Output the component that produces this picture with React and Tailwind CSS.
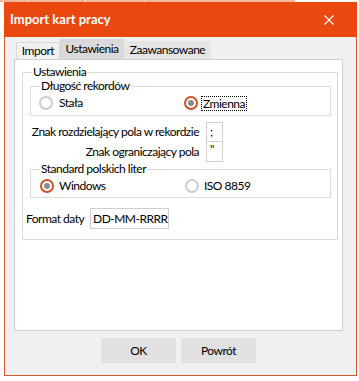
function Radio({ checked }) {
  if (checked) {
    return (
      <span className="w-[14px] h-[14px] rounded-full border-2 border-[#d4501f] bg-white flex items-center justify-center shrink-0">
        <span className="w-[6px] h-[6px] rounded-full bg-[#8c8c8c]" />
      </span>
    );
  }
  return <span className="w-[14px] h-[14px] rounded-full border-2 border-[#cdcdcd] bg-white shrink-0" />;
}

function Group({ title, className, children }) {
  return (
    <fieldset className={`border border-[#dcdcdc] ${className}`}>
      <legend className="ml-[9px] px-[1px] leading-[14px]">{title}</legend>
      {children}
    </fieldset>
  );
}

export default function App() {
  return (
    <div className="w-[359px] h-[381px] bg-white overflow-hidden whitespace-nowrap text-[12px] tracking-[-0.5px] text-black font-['Lato','Segoe_UI',sans-serif]">
      {/* strip of the window behind */}
      <div className="h-[2px] flex bg-[#f6b79c]">
        <div className="w-[27px]" />
        <div className="w-[1px] bg-white" />
        <div className="w-[57px]" />
        <div className="w-[1px] bg-white" />
        <div className="w-[59px]" />
        <div className="w-[1px] bg-white" />
        <div className="w-[149px]" />
        <div className="flex-1 bg-white" />
      </div>

      <div className="ml-[4px] w-[353px] h-[374px] flex flex-col">
        <div className="h-[35px] bg-[#e9490f] flex items-center justify-between pl-[6px] pr-[20px]">
          <span className="text-white font-bold text-[13px] tracking-normal">Import kart pracy</span>
          <svg width="10" height="10" viewBox="0 0 10 10" className="mr-[3px]">
            <path d="M0.5 0.5 L9.5 9.5 M9.5 0.5 L0.5 9.5" stroke="white" strokeWidth="1.1" />
          </svg>
        </div>

        <div className="flex-1 flex flex-col bg-[#f0f0f0] border-x border-b border-[#d95a2c]">
          <div className="mt-[2px] h-[20px] pl-[11px] flex items-end">
            <div className="w-[44px] h-[17px] border border-b-0 border-[#dadada] bg-[#f0f0f0] flex items-center justify-center">
              Import
            </div>
            <div className="w-[64px] h-[20px] bg-[#d9d9d9] flex items-center justify-center">
              Ustawienia
            </div>
            <div className="w-[87px] h-[18px] bg-[#e5e5e5] flex items-center justify-center">
              Zaawansowane
            </div>
          </div>

          <div className="ml-[9px] w-[329px] h-[272px] bg-white border border-[#d0d0d0]">
            <Group title="Ustawienia" className="ml-[7px] mt-[5px] w-[316px] pb-[10px]">
              <Group title="Długość rekordów" className="ml-[7px] w-[301px] pb-[2px]">
                <div className="h-[20px] pl-[8px] grid grid-cols-[145px_1fr] items-center">
                  <div className="flex items-center gap-[6px]">
                    <Radio />
                    <span>Stała</span>
                  </div>
                  <div className="flex items-center">
                    <Radio checked />
                    <span className="ml-[3px] px-[1px] leading-[13px] border border-dotted border-black">
                      Zmienna
                    </span>
                  </div>
                </div>
              </Group>

              <div className="mt-[6px] flex">
                <div className="w-[176px] flex flex-col items-end">
                  <div className="h-[20px] flex items-center">Znak rozdzielający pola w rekordzie</div>
                  <div className="h-[20px] flex items-center">Znak ograniczający pola</div>
                </div>
                <div className="ml-[7px] w-[17px] h-[40px] border border-[#cfcfcf] flex flex-col">
                  <div className="h-[19px] border-b border-[#cfcfcf] pl-[3px] leading-[18px]">;</div>
                  <div className="flex-1 pl-[3px] leading-[14px]">"</div>
                </div>
              </div>

              <Group title="Standard polskich liter" className="ml-[7px] w-[301px] pb-[2px]">
                <div className="h-[19px] pl-[9px] grid grid-cols-[145px_1fr] items-center">
                  <div className="flex items-center gap-[5px]">
                    <Radio checked />
                    <span>Windows</span>
                  </div>
                  <div className="flex items-center gap-[5px]">
                    <Radio />
                    <span>ISO 8859</span>
                  </div>
                </div>
              </Group>

              <div className="mt-[10px] flex items-center">
                <span className="ml-[3px] w-[64px]">Format daty</span>
                <div className="w-[79px] h-[21px] border border-[#cfcfcf] pl-[2px] flex items-center">
                  DD-MM-RRRR
                </div>
              </div>
            </Group>
          </div>

          <div className="mt-[7px] ml-[96px] flex gap-[5px]">
            <button className="w-[75px] h-[25px] bg-[#e1e1e1] flex items-center justify-center">OK</button>
            <button className="w-[75px] h-[25px] bg-[#e1e1e1] flex items-center justify-center">Powrót</button>
          </div>
        </div>
      </div>
    </div>
  );
}
